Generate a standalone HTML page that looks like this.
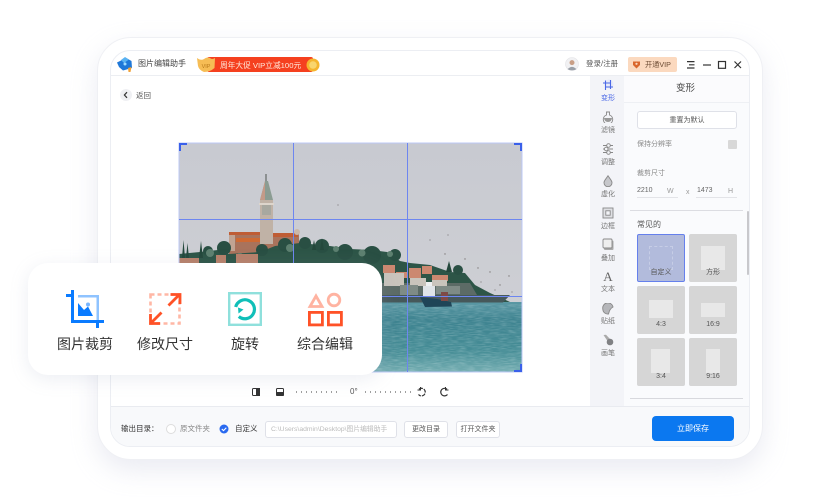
<!DOCTYPE html>
<html lang="zh"><head><meta charset="utf-8"><title>图片编辑助手</title>
<style>
html,body{margin:0;padding:0;background:#fff}
#p{position:relative;width:818px;height:501px;overflow:hidden;background:#fff;font-family:"Liberation Sans","Noto Sans CJK SC",sans-serif;color:#555}
#p div,#p svg{position:absolute}
.t{white-space:nowrap;line-height:1}
.side{width:34px;text-align:center;font-size:7px;color:#777;left:591px}
.tile{width:48px;height:48px;background:#d6d6d6;border-radius:2px}
.tile i{position:absolute;background:#e8e8e8;display:block}
.tile span{position:absolute;left:0;right:0;text-align:center;font-size:7px;color:#555;line-height:1}
.btn{border:1px solid #dfe1e8;border-radius:3px;background:#fff;text-align:center;font-size:7px;color:#555;box-sizing:border-box}
.lab{font-size:14px;color:#333;white-space:nowrap;line-height:1;text-align:center}
</style></head><body><div id="p">

<div style="left:97px;top:37px;width:666px;height:423px;border-radius:34px;background:#fff;border:1px solid #eff0f4;box-sizing:border-box;box-shadow:0 10px 26px rgba(185,190,212,.3)"></div>
<div style="left:110px;top:50px;width:640px;height:397px;border-radius:20px;background:#fff;border:1px solid #eceef3;box-sizing:border-box;overflow:hidden">
  <div style="left:0;top:24px;width:640px;height:1px;background:#eceef2"></div>
  <div style="left:479px;top:25px;width:34px;height:330px;background:#f3f4f8"></div>
  <div style="left:513px;top:25px;width:125px;height:330px;background:#fafbfd"></div>
  <div style="left:513px;top:25px;width:125px;height:27px;background:#fbfbfd;border-bottom:1px solid #eef0f4;box-sizing:border-box"></div>
  <div style="left:0;top:355px;width:640px;height:42px;background:#f8f9fb;border-top:1px solid #e9ebf0;box-sizing:border-box"></div>
</div>

<!-- header -->
<svg style="left:116px;top:56px" width="18" height="18" viewBox="0 0 18 18"><path d="M1 6.500 L10 2 L15.500 5 L16 12 L7 14.500 L3 11Z" fill="#1f78d8"/><path d="M5 4 L9 1 L13 3.500 L8 7Z" fill="#59b2f2"/><circle cx="9" cy="8" r="1.500" fill="#9fdcff"/><path d="M12 12l3.500-1-1 5-2 0z" fill="#f2a33a"/></svg>
<div class="t" style="left:138px;top:60px;font-size:8px;color:#444">图片编辑助手</div>
<svg style="left:197px;top:56px" width="124" height="17" viewBox="0 0 124 17"><rect x="10" y="1" width="106" height="15" rx="2" fill="#f5401f"/><path d="M0 2 Q4 5 7 3 Q10 0.500 13 2 Q15 4 18 2 L17.500 12 Q13 16 7 16 Q2 14 1 10Z" fill="#f6bd55"/><circle cx="116" cy="9" r="6.500" fill="#f5b52e"/><circle cx="116" cy="9" r="3.800" fill="#f9d56d"/><text x="9" y="12" font-size="5.500" fill="#b97a1b" text-anchor="middle" font-family="Liberation Sans">VIP</text><text x="23" y="12" font-size="7.700" fill="#ffe9dc" font-family="Liberation Sans,Noto Sans CJK SC,sans-serif">周年大促 VIP立减100元</text></svg>
<svg style="left:565px;top:57px" width="14" height="14" viewBox="0 0 14 14"><circle cx="7" cy="7" r="6.500" fill="#f1f1f3" stroke="#e2e2e6" stroke-width=".6"/><circle cx="7" cy="5.600" r="2.500" fill="#c99f86"/><path d="M2.500 12.200 Q7 7.500 11.500 12.200 Q7 14.600 2.500 12.200Z" fill="#9aa0a8"/></svg>
<div class="t" style="left:586px;top:60px;font-size:7.500px;color:#555">登录/注册</div>
<div style="left:628px;top:57px;width:49px;height:15px;border-radius:2px;background:#fbd9bf"></div>
<svg style="left:632px;top:60px" width="9" height="9" viewBox="0 0 9 9"><path d="M1 1.500 H8 V5 L4.500 8.500 L1 5Z" fill="#d9662c"/><circle cx="4.500" cy="3.800" r="1.100" fill="#fbd9bf"/></svg>
<div class="t" style="left:645px;top:61px;font-size:7.200px;color:#6b4a33">开通VIP</div>
<svg style="left:685px;top:59px" width="60" height="12" viewBox="0 0 60 12" fill="none" stroke="#333" stroke-width="1.200"><path d="M2 2.600H9.500M4 5.800H9.500M2 9H9.500"/><path d="M18 6H26"/><rect x="33.500" y="2.500" width="7" height="6.800"/><path d="M49.500 2.500L56 9M56 2.500L49.500 9"/></svg>

<!-- back -->
<div style="left:120px;top:89px;width:12px;height:12px;border-radius:50%;background:#eff0f3"></div>
<svg style="left:120px;top:89px" width="12" height="12" viewBox="0 0 12 12" fill="none" stroke="#333" stroke-width="1.200"><path d="M7 3.200L4.400 6L7 8.800"/></svg>
<div class="t" style="left:136px;top:92px;font-size:7.500px;color:#555">返回</div>

<!-- photo -->
<svg style="left:178px;top:142px" width="345" height="232" viewBox="178 142 345 232">
<defs>
<linearGradient id="sky" x1="0" y1="0" x2="0" y2="1"><stop offset="0" stop-color="#c8cad1"/><stop offset="1" stop-color="#d0d1d5"/></linearGradient>
<linearGradient id="sea" x1="0" y1="0" x2="0" y2="1"><stop offset="0" stop-color="#5b98a4"/><stop offset=".25" stop-color="#3e8390"/><stop offset=".7" stop-color="#468d96"/><stop offset="1" stop-color="#74adb1"/></linearGradient>
<filter id="n" x="0" y="0" width="100%" height="100%"><feTurbulence type="fractalNoise" baseFrequency=".12 .9" numOctaves="2" seed="4"/><feColorMatrix values="0 0 0 0 .85  0 0 0 0 .95  0 0 0 0 .95  1.600 0 0 0 -.6"/></filter>
</defs>
<rect x="179" y="143" width="343" height="229" fill="url(#sky)"/>
<rect x="179" y="302" width="343" height="70" fill="url(#sea)"/>
<rect x="179" y="304" width="343" height="68" filter="url(#n)" opacity=".3"/>
<!-- church behind trees -->
<rect x="229" y="234" width="70" height="22" fill="#a9735c"/><rect x="229" y="232" width="31" height="3" fill="#bf5d35"/><rect x="273" y="233" width="25" height="4" fill="#bf5d35"/><rect x="236" y="238" width="24" height="4" fill="#cf6a33"/><rect x="229" y="235" width="6" height="16" fill="#c1a493"/>
<circle cx="297" cy="232" r="3" fill="#cbb7a8"/>
<rect x="260" y="200" width="13" height="44" fill="#c0b2a6"/><rect x="262" y="205" width="9" height="10" fill="#a8a8a0"/><rect x="259" y="203" width="15" height="2" fill="#ddd5cc"/>
<path d="M260 200 L265 181 L268 181 L273 200Z" fill="#8b9c92"/><path d="M260 200 L265 181 L265 200Z" fill="#c49a88"/><path d="M266 181V174" stroke="#4f5550" stroke-width="1"/>
<!-- island base -->
<path d="M179 302 V254 L200 252 L218 250 L229 254 L260 252 L275 246 L300 243 L330 246 L350 249 L372 250 L387 252 L400 261 L410 263 L430 265 L450 272 L465 273 L475 285 L490 293 L510 302Z" fill="#2d5547"/>
<g fill="#294f43"><circle cx="224" cy="248" r="7"/><circle cx="208" cy="251" r="5"/><circle cx="262" cy="250" r="6"/><circle cx="285" cy="245" r="7"/><circle cx="305" cy="243" r="6"/><circle cx="322" cy="246" r="7"/><circle cx="345" cy="252" r="8"/><circle cx="372" cy="255" r="9"/><circle cx="395" cy="255" r="6"/></g>
<g fill="#5d8070"><circle cx="210" cy="253" r="4"/><circle cx="240" cy="256" r="3"/><circle cx="290" cy="248" r="4"/><circle cx="336" cy="249" r="3"/><circle cx="362" cy="253" r="3.500"/><circle cx="390" cy="254" r="3"/></g>
<path d="M182 258 L183.500 240 L185 258Z M186 258 L187.500 243 L189 258Z M199 258 L201 241 L203 258Z M312 250 L314 240 L316 250Z M320 250 L322 238 L324 250Z" fill="#24483c"/>
<path d="M446 272 L449 261 L452 272Z" fill="#24483c"/><circle cx="458" cy="270" r="5" fill="#2a5044"/>
<path d="M179 258h20v6h-20zM216 255h10v9h-10zM236 254h22v10h-22z" fill="#b7806a"/>
<!-- village -->
<path d="M380 283H470L480 300H380Z" fill="#5c6b66"/>
<path d="M383 265h12v8h-12zM396 272h12v6h-12zM409 268h12v10h-12zM422 266h10v8h-10zM432 275h16v6h-16z" fill="#cc8870"/>
<path d="M384 273h20v13h-20zM410 278h16v8h-16zM432 280h15v6h-15z" fill="#c9c4bc"/>
<path d="M382 295H510L503 302.500H382Z" fill="#46585a"/>
<path d="M400 285h18v10h-18zM436 286h24v8h-24z" fill="#7f8b86"/>
<!-- boat -->
<path d="M420 297 L437 299 L451 302 L452 306.500 L425 307Z" fill="#1f4557"/><path d="M423 286h12v10h-12z" fill="#dfe4e8"/><path d="M426 282h6v4h-6z" fill="#eef0f2"/><rect x="441" y="292" width="7" height="9" fill="#7e4a46"/>
<g fill="#574f4d" opacity=".65"><circle cx="465" cy="259" r=".7"/><circle cx="445" cy="254" r=".7"/><circle cx="490" cy="272" r=".7"/><circle cx="500" cy="285" r=".7"/><circle cx="478" cy="268" r=".7"/><circle cx="509" cy="276" r=".7"/><circle cx="430" cy="240" r=".6"/><circle cx="338" cy="205" r=".6"/><circle cx="481" cy="282" r=".6"/><circle cx="512" cy="292" r=".6"/><circle cx="448" cy="235" r=".6"/><circle cx="495" cy="290" r=".6"/></g>
<g fill="none" stroke-width="1"><rect x="179" y="143" width="343" height="229" stroke="#bcc8f6"/><path d="M293.500 143V372M407.500 143V372M179 219.500H522M179 296.500H522" stroke="#6d86f0"/></g>
<path d="M179 143h8v2h-6v6h-2zM522 143h-8v2h6v6h2zM179 372h8v-2h-6v-6h-2zM522 372h-8v-2h6v-6h2z" fill="#3a60ea"/>
</svg>

<!-- controls -->
<svg style="left:250px;top:385px" width="205" height="14" viewBox="0 0 205 14" fill="none"><rect x="2.500" y="3.500" width="7" height="7" rx="1" fill="#fff" stroke="#333"/><rect x="6" y="3" width="4" height="8" fill="#333"/><rect x="26.500" y="3.500" width="7" height="7" rx="1" stroke="#333"/><rect x="26" y="7" width="8" height="4" rx="1" fill="#333"/><path d="M46 7H91" stroke="#666" stroke-width="1.200" stroke-dasharray="1 4"/><path d="M115 7H161" stroke="#666" stroke-width="1.200" stroke-dasharray="1 4"/><path d="M169 4.200 A3.800 3.800 0 1 1 168.500 9.500" stroke="#333" stroke-width="1.200" stroke-dasharray="4 1"/><path d="M170.500 2v3h-3" stroke="#333"/><path d="M197 4.200 A3.800 3.800 0 1 0 197.500 9.500" stroke="#333" stroke-width="1.200"/><path d="M195.500 2v3h3" stroke="#333"/></svg>
<div class="t" style="left:350px;top:388px;font-size:8px;color:#555">0°</div>

<!-- sidebar -->
<svg style="left:602px;top:79px" width="12" height="12" viewBox="0 0 12 12" fill="none" stroke="#4a68e6" stroke-width="1.100"><circle cx="7" cy="5" r="4.500" fill="#e8ebf8" stroke="none"/><path d="M1 4H8.500V10M3.500 1.500V8H11M8.500 1v3M3.500 8v3"/></svg>
<div class="side t" style="top:95px;color:#4a68e6">变形</div>
<svg style="left:602px;top:111px" width="12" height="12" viewBox="0 0 12 12"><path d="M4.500 1h3v3a4.700 4.700 0 1 1-3 0z" fill="#f3f4f8" stroke="#888" stroke-width=".9"/><path d="M2 7h8a4 4 0 0 1-8 0z" fill="#999"/></svg>
<div class="side t" style="top:127px">滤镜</div>
<svg style="left:602px;top:143px" width="12" height="12" viewBox="0 0 12 12" fill="none" stroke="#888" stroke-width=".9"><path d="M1 2.500H4.500M8.500 2.500H11M1 9.500H4.500M8.500 9.500H11M1 6H2.500M6 6H11"/><circle cx="6.500" cy="2.500" r="1.800"/><circle cx="4.200" cy="6" r="1.800"/><circle cx="6.500" cy="9.500" r="1.800"/></svg>
<div class="side t" style="top:159px">调整</div>
<svg style="left:602px;top:175px" width="12" height="12" viewBox="0 0 12 12"><path d="M6 .8 C8 4 10 5.500 10 7.700 A4 4 0 0 1 2 7.700 C2 5.500 4 4 6 .8Z" fill="#c6c7cb" stroke="#888" stroke-width=".9"/></svg>
<div class="side t" style="top:191px">虚化</div>
<svg style="left:602px;top:207px" width="12" height="12" viewBox="0 0 12 12" fill="none" stroke="#888" stroke-width=".9"><rect x="1" y="1" width="10" height="10" fill="#dedfe3"/><rect x="3.800" y="3.800" width="4.400" height="4.400" fill="#f3f4f8"/></svg>
<div class="side t" style="top:223px">边框</div>
<svg style="left:602px;top:238px" width="12" height="12" viewBox="0 0 12 12"><rect x="2" y="2.500" width="9.500" height="9.500" rx="1" fill="#aaa"/><rect x="1" y="1" width="9" height="9" rx="1" fill="#eee" stroke="#888" stroke-width=".9"/></svg>
<div class="side t" style="top:255px">叠加</div>
<div class="side t" style="top:270px;font-size:13px;font-family:'Liberation Serif',serif;color:#666">A</div>
<div class="side t" style="top:286px">文本</div>
<svg style="left:602px;top:303px" width="12" height="12" viewBox="0 0 12 12"><path d="M.8 6 A5 5 0 0 1 11 4 C9 5 7.500 6.500 6.500 11 A5 5 0 0 1 .8 6Z" fill="#b5b6ba" stroke="#888" stroke-width=".9"/></svg>
<div class="side t" style="top:318px">贴纸</div>
<svg style="left:602px;top:334px" width="12" height="12" viewBox="0 0 12 12"><path d="M1.500 1 L4 .8 L8 5 L5.500 7Z" fill="#aaa"/><circle cx="8" cy="8" r="3.300" fill="#808184"/></svg>
<div class="side t" style="top:350px">画笔</div>

<!-- panel -->
<div class="t" style="left:676px;top:84px;font-size:9.500px;color:#444">变形</div>
<div class="btn" style="left:637px;top:111px;width:100px;height:18px;line-height:17px">重置为默认</div>
<div class="t" style="left:637px;top:141px;font-size:7px;color:#888">保持分辨率</div>
<div style="left:728px;top:140px;width:9px;height:9px;background:#d8d8d8;border-radius:1px"></div>
<div class="t" style="left:637px;top:170px;font-size:7px;color:#888">裁剪尺寸</div>
<div class="t" style="left:637px;top:187px;font-size:7px;color:#666">2210</div>
<div class="t" style="left:667px;top:188px;font-size:7px;color:#999">W</div>
<div class="t" style="left:686px;top:189px;font-size:7px;color:#999">x</div>
<div class="t" style="left:697px;top:187px;font-size:7px;color:#666">1473</div>
<div class="t" style="left:728px;top:188px;font-size:7px;color:#999">H</div>
<div style="left:637px;top:197px;width:41px;height:1px;background:#e3e4e8"></div>
<div style="left:696px;top:197px;width:41px;height:1px;background:#e3e4e8"></div>
<div style="left:630px;top:210px;width:113px;height:1px;background:#dcdde2"></div>
<div class="t" style="left:637px;top:221px;font-size:8px;color:#555">常见的</div>
<div style="left:747px;top:211px;width:2px;height:64px;background:#c8c8cc;border-radius:1px"></div>

<div class="tile" style="left:637px;top:234px;background:#b2bbdc;border:1px solid #6580ec;box-sizing:border-box"><i style="left:11px;top:11px;width:24px;height:24px;background:transparent;border:1px dashed #c6cde6;box-sizing:border-box"></i><span style="top:34px">自定义</span></div>
<div class="tile" style="left:689px;top:234px"><i style="left:12px;top:12px;width:24px;height:24px"></i><span style="top:35px">方形</span></div>
<div class="tile" style="left:637px;top:286px"><i style="left:12px;top:14px;width:24px;height:18px"></i><span style="top:35px">4:3</span></div>
<div class="tile" style="left:689px;top:286px"><i style="left:12px;top:17px;width:24px;height:14px"></i><span style="top:35px">16:9</span></div>
<div class="tile" style="left:637px;top:338px"><i style="left:14px;top:11px;width:19px;height:24px"></i><span style="top:35px">3:4</span></div>
<div class="tile" style="left:689px;top:338px"><i style="left:17px;top:11px;width:14px;height:24px"></i><span style="top:35px">9:16</span></div>
<div style="left:630px;top:398px;width:113px;height:1px;background:#d8d9de"></div>

<!-- footer -->
<div class="t" style="left:121px;top:425px;font-size:7.500px;color:#333">输出目录：</div>
<div style="left:166px;top:424px;width:8px;height:8px;border:1px solid #ddd;border-radius:50%;background:#fff"></div>
<div class="t" style="left:180px;top:425px;font-size:7.500px;color:#888">原文件夹</div>
<svg style="left:219px;top:424px" width="10" height="10" viewBox="0 0 10 10"><circle cx="5" cy="5" r="4.500" fill="#2a6af0"/><path d="M2.800 5L4.500 6.600L7.300 3.700" fill="none" stroke="#fff" stroke-width="1.100"/></svg>
<div class="t" style="left:235px;top:425px;font-size:7.500px;color:#333">自定义</div>
<div class="btn" style="left:265px;top:421px;width:132px;height:17px;line-height:15px;text-align:left;padding-left:5px;color:#bbb;font-size:6.800px;white-space:nowrap;overflow:hidden">C:\Users\admin\Desktop\图片编辑助手</div>
<div class="btn" style="left:404px;top:421px;width:44px;height:17px;line-height:16px">更改目录</div>
<div class="btn" style="left:456px;top:421px;width:44px;height:17px;line-height:16px">打开文件夹</div>
<div style="left:652px;top:416px;width:82px;height:25px;border-radius:4px;background:#0b78f0;color:#fff;font-size:8px;line-height:25px;text-align:center">立即保存</div>

<!-- floating card -->
<div style="left:28px;top:263px;width:354px;height:112px;border-radius:20px;background:#fff;box-shadow:0 4px 18px rgba(150,160,190,.18)"></div>
<svg style="left:64px;top:288px" width="42" height="42" viewBox="0 0 42 42">
<path d="M14 7H35V32H32.500V9.500H14Z" fill="#8fc3ff"/>
<path d="M2 6H7V2H10V6V32H40V35H35V40H32V35H7V9H2Z" fill="#0a7bff"/>
<path d="M14 28V15L20 22L24 18.500L29 28Z" fill="#0a7bff"/><circle cx="24" cy="16.500" r="2" fill="#79b6ff"/>
</svg>
<div class="lab" style="left:57px;top:337px;width:56px">图片裁剪</div>
<svg style="left:148px;top:292px" width="34" height="34" viewBox="0 0 34 34" fill="none">
<path d="M2.500 2.500H31.500V31.500H2.500Z" stroke="#ffb7a5" stroke-width="2.600" stroke-dasharray="4 3"/>
<path d="M20.500 13.500L31 3M22.500 2.500H32V12" stroke="#ff5227" stroke-width="2.800"/>
<path d="M13.500 20.500L3 31M2.500 22V31.500H12" stroke="#ff5227" stroke-width="2.800"/>
</svg>
<div class="lab" style="left:137px;top:337px;width:56px">修改尺寸</div>
<svg style="left:228px;top:292px" width="34" height="34" viewBox="0 0 34 34" fill="none">
<rect x="1.200" y="1.200" width="31.600" height="31.600" stroke="#8fe0dc" stroke-width="2.400"/>
<path d="M10.800 24.500A9.500 9.500 0 1 0 7.700 15" stroke="#10bfb8" stroke-width="3.200"/>
<path d="M10 15.500L15.500 17.500L10.500 21.500Z" fill="#10bfb8"/>
</svg>
<div class="lab" style="left:231px;top:337px;width:28px">旋转</div>
<svg style="left:307px;top:292px" width="36" height="36" viewBox="0 0 36 36" fill="none">
<path d="M9 4L15 14.500H3Z" stroke="#ffb3a1" stroke-width="2.800"/>
<circle cx="27" cy="8" r="5.800" stroke="#ffb3a1" stroke-width="2.800"/>
<rect x="2.400" y="20.400" width="13" height="12.500" stroke="#ff5227" stroke-width="2.800"/>
<rect x="21.400" y="20.400" width="13" height="12.500" stroke="#ff5227" stroke-width="2.800"/>
</svg>
<div class="lab" style="left:297px;top:337px;width:56px">综合编辑</div>

</div></body></html>
